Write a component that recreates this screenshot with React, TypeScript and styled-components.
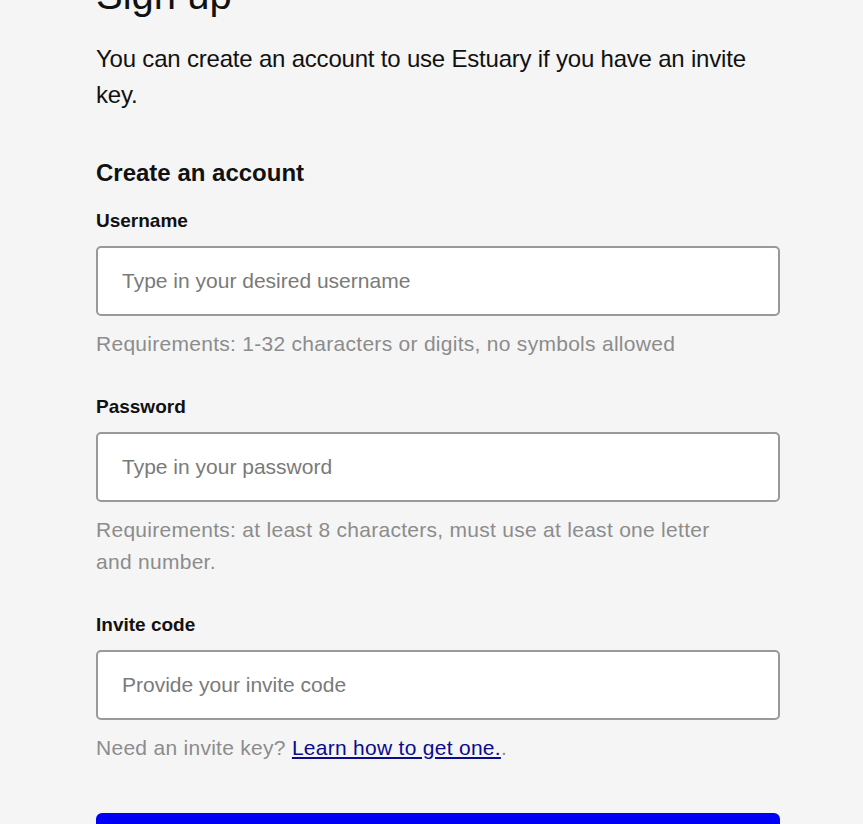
import React from "react";
import styled, { createGlobalStyle } from "styled-components";

const GlobalStyle = createGlobalStyle`
  html, body {
    margin: 0;
    padding: 0;
    background: #f5f5f5;
  }
  body {
    font-family: "Liberation Sans", Arial, Helvetica, sans-serif;
    color: #111;
    overflow: hidden;
  }
  * { box-sizing: border-box; }
`;

const Page = styled.main`
  width: 684px;
  margin: -29px 0 0 96px;
  display: flex;
  flex-direction: column;
`;

const Title = styled.h1`
  margin: 0;
  font-size: 40px;
  line-height: 48px;
  font-weight: 400;
  color: #111;
`;

const Intro = styled.p`
  margin: 22px 0 0;
  font-size: 24px;
  line-height: 36px;
  letter-spacing: -0.2px;
  color: #111;
`;

const SectionTitle = styled.h2`
  margin: 45px 0 0;
  font-size: 24px;
  line-height: 30px;
  font-weight: 700;
  color: #111;
`;

const Form = styled.form`
  display: flex;
  flex-direction: column;
  margin-top: 21px;
`;

const Field = styled.div<{ $first?: boolean }>`
  display: flex;
  flex-direction: column;
  margin-top: ${(p) => (p.$first ? "0" : "35px")};
`;

const Label = styled.label`
  font-size: 19px;
  line-height: 24px;
  font-weight: 700;
  color: #111;
`;

const Input = styled.input`
  margin-top: 13px;
  width: 100%;
  height: 70px;
  padding: 0 24px;
  border: 2px solid #999;
  border-radius: 5px;
  background: #fff;
  font-family: "Liberation Sans", Arial, sans-serif;
  font-size: 21px;
  color: #222;
  outline: none;
  &::placeholder {
    color: #7a7a7a;
  }
`;

const Help = styled.p<{ $narrow?: boolean }>`
  margin: 12px 0 0;
  font-size: 21px;
  line-height: 32px;
  letter-spacing: 0.28px;
  color: #8c8c8c;
  max-width: ${(p) => (p.$narrow ? "640px" : "none")};
`;

const HelpLink = styled.a`
  color: #0b0b8f;
  text-decoration: underline;
`;

const SubmitButton = styled.button`
  margin-top: 49px;
  width: 100%;
  height: 64px;
  border: none;
  border-radius: 6px;
  background: #0000f5;
  color: #fff;
  font-family: "Liberation Sans", Arial, sans-serif;
  font-size: 22px;
  font-weight: 700;
`;

export default function App() {
  return (
    <>
      <GlobalStyle />
      <Page>
        <Title>Sign up</Title>
        <Intro>
          You can create an account to use Estuary if you have an invite key.
        </Intro>
        <SectionTitle>Create an account</SectionTitle>
        <Form onSubmit={(e) => e.preventDefault()}>
          <Field $first>
            <Label htmlFor="username">Username</Label>
            <Input id="username" type="text" placeholder="Type in your desired username" />
            <Help>Requirements: 1-32 characters or digits, no symbols allowed</Help>
          </Field>
          <Field>
            <Label htmlFor="password">Password</Label>
            <Input id="password" type="password" placeholder="Type in your password" />
            <Help $narrow>
              Requirements: at least 8 characters, must use at least one letter and number.
            </Help>
          </Field>
          <Field>
            <Label htmlFor="invite">Invite code</Label>
            <Input id="invite" type="text" placeholder="Provide your invite code" />
            <Help>
              Need an invite key? <HelpLink href="#">Learn how to get one.</HelpLink>.
            </Help>
          </Field>
          <SubmitButton type="submit">Create an account</SubmitButton>
        </Form>
      </Page>
    </>
  );
}
